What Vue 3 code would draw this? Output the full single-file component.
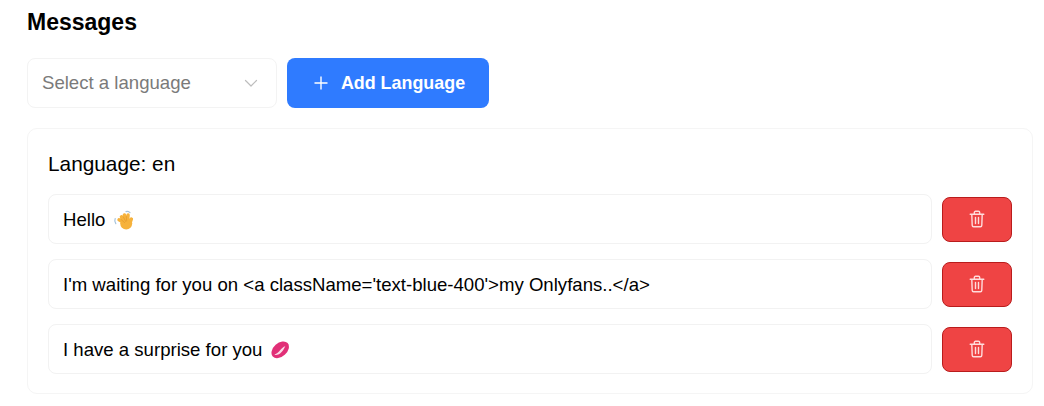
<script setup>
const messages = [
  { id: 1, text: 'Hello', emoji: 'wave' },
  { id: 2, text: "I'm waiting for you on <a className='text-blue-400'>my Onlyfans..</a>", emoji: '' },
  { id: 3, text: 'I have a surprise for you', emoji: 'kiss' }
]
</script>

<template>
  <div class="page">
    <h2 class="title">Messages</h2>
    <div class="toolbar">
      <div class="select">
        <span class="placeholder">Select a language</span>
        <svg class="chevron" width="14" height="14" viewBox="0 0 14 14" fill="none" stroke="#bdbdbd" stroke-width="1.2" stroke-linecap="round" stroke-linejoin="round">
          <path d="M1.5 4.5 7 10l5.5-5.5" />
        </svg>
      </div>
      <button class="add" type="button">
        <svg width="16" height="16" viewBox="0 0 16 16" fill="none" stroke="#fff" stroke-width="1.4">
          <path d="M8 1.5v13M1.5 8h13" />
        </svg>
        <span>Add Language</span>
      </button>
    </div>
    <section class="card">
      <div class="lang">Language: en</div>
      <div class="rows">
        <div v-for="m in messages" :key="m.id" class="row">
          <div class="field">
            <span>{{ m.text }}</span>
            <svg v-if="m.emoji === 'wave'" class="emoji" width="22" height="22" viewBox="0 0 22 22">
              <path d="M3.2 9.5c-.7 1.7-.5 3.6.6 5.2M14 2.6c1.4-.4 2.9 0 4 1" fill="none" stroke="#a6c3dc" stroke-width="1.2" stroke-linecap="round" />
              <g fill="none" stroke="#f6b23c" stroke-width="3.4" stroke-linecap="round">
                <path d="M13 14 7 10.8M13 13 9.4 7.8M14 13 12.4 6M15.5 13l.6-7M18 14l1.4-4" />
              </g>
              <circle cx="14.2" cy="14.4" r="6" fill="#f6b23c" />
              <path d="M9 10.4l3.6 3.2M11.4 8l2.4 4.6M14.3 7.4l.4 4.4" fill="none" stroke="#e39a2c" stroke-width=".7" stroke-linecap="round" />
            </svg>
            <svg v-if="m.emoji === 'kiss'" class="emoji" width="22" height="22" viewBox="0 0 22 22">
              <ellipse cx="11.2" cy="10.8" rx="10" ry="6.8" transform="rotate(-42 11.2 10.8)" fill="#e12f77" />
              <path d="M5.4 15.7c2.6-.8 4.2-2.5 5.9-4.6 1.6-2 3-3.1 5-3.8-1.4 2.9-2.8 5.2-4.9 6.9-1.9 1.5-3.8 2-6 1.5Z" fill="#fbdbe7" />
            </svg>
          </div>
          <button class="del" type="button" aria-label="Delete">
            <svg width="16" height="18" viewBox="0 0 16 18" fill="none" stroke="#ffdcdc" stroke-width="1.4" stroke-linecap="round" stroke-linejoin="round">
              <path d="M1.2 4.2h13.6M5.3 4V2.6c0-.8.5-1.3 1.2-1.3h3c.7 0 1.2.5 1.2 1.3V4M2.8 4.4l.4 10.8c0 .9.6 1.5 1.4 1.5h6.8c.8 0 1.4-.6 1.4-1.5l.4-10.8M6.5 7.5v6M9.5 7.5v6" />
            </svg>
          </button>
        </div>
      </div>
    </section>
  </div>
</template>

<style scoped>
.page {
  width: 1044px;
  height: 406px;
  box-sizing: border-box;
  padding: 8px 11px 0 27px;
  background: #fff;
  font-family: "Liberation Sans", Arial, sans-serif;
  color: #000;
  overflow: hidden;
}
.title {
  margin: 0 0 22px;
  font-size: 23px;
  line-height: 28px;
  font-weight: 700;
}
.toolbar {
  display: flex;
  gap: 10px;
  margin-bottom: 20px;
}
.select {
  width: 250px;
  height: 50px;
  box-sizing: border-box;
  display: flex;
  align-items: center;
  justify-content: space-between;
  padding: 0 18px 0 14px;
  border: 1px solid #f3f3f3;
  border-radius: 8px;
}
.placeholder {
  font-size: 18.6px;
  color: #7a7a7a;
}
.add {
  width: 202px;
  height: 50px;
  display: flex;
  align-items: center;
  justify-content: center;
  gap: 12px;
  padding: 0 0 0 2px;
  border: 0;
  border-radius: 8px;
  background: #2f7bff;
  color: #fff;
  font-family: inherit;
  font-size: 17.9px;
  font-weight: 700;
}
.card {
  height: 266px;
  box-sizing: border-box;
  padding: 20px;
  border: 1px solid #f5f5f5;
  border-radius: 10px;
}
.lang {
  font-size: 20.8px;
  line-height: 30px;
  margin-bottom: 15px;
}
.rows {
  display: flex;
  flex-direction: column;
  gap: 15px;
}
.row {
  display: flex;
  align-items: center;
  gap: 10px;
}
.field {
  flex: 1;
  height: 50px;
  box-sizing: border-box;
  display: flex;
  align-items: center;
  gap: 7px;
  padding: 1px 14px 0;
  border: 1px solid #f2f2f2;
  border-radius: 8px;
  font-size: 18.6px;
}
.emoji {
  flex: none;
}
.del {
  width: 70px;
  height: 45px;
  display: flex;
  align-items: center;
  justify-content: center;
  padding: 0;
  border: 1px solid #b91c1c;
  border-radius: 8px;
  background: #ef4444;
}
</style>

<style>
body { background: #fff; }
</style>
